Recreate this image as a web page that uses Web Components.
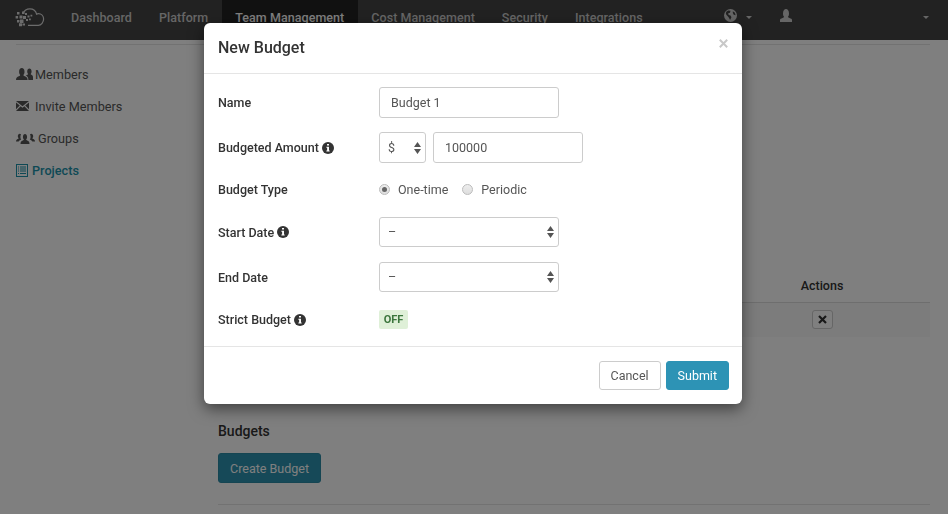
<!DOCTYPE html>
<html>
<head>
<meta charset="utf-8">
<title>New Budget</title>
<style>
  html, body { margin: 0; padding: 0; height: 100%; overflow: hidden; }
  body { font-family: Roboto, "Liberation Sans", sans-serif; font-size: 13px; color: #333; background: #fff; }
</style>
</head>
<body>
<app-shell>
  <top-nav slot="nav">
    <nav-link>Dashboard</nav-link>
    <nav-link>Platform</nav-link>
    <nav-link active>Team Management</nav-link>
    <nav-link>Cost Management</nav-link>
    <nav-link>Security</nav-link>
    <nav-link>Integrations</nav-link>
  </top-nav>
  <side-menu slot="side">
    <side-item icon="members">Members</side-item>
    <side-item icon="invite">Invite Members</side-item>
    <side-item icon="groups">Groups</side-item>
    <side-item icon="projects" active>Projects</side-item>
  </side-menu>
  <project-page slot="main"></project-page>
</app-shell>

<modal-dialog heading="New Budget">
  <form-row label="Name" height="31" gap="14"><text-box width="180" height="31">Budget 1</text-box></form-row>
  <form-row label="Budgeted Amount" info height="31" gap="14">
    <select-box width="47" height="31" short>$</select-box>
    <text-box width="150" height="31" style="margin-left:7px">100000</text-box>
  </form-row>
  <form-row label="Budget Type" height="24" gap="16">
    <radio-option checked>One-time</radio-option>
    <radio-option>Periodic</radio-option>
  </form-row>
  <form-row label="Start Date" info height="30" gap="15"><select-box width="180" height="30">–</select-box></form-row>
  <form-row label="End Date" height="30" gap="14"><select-box width="180" height="30">–</select-box></form-row>
  <form-row label="Strict Budget" info height="27" gap="1"><off-switch>OFF</off-switch></form-row>
  <ui-button slot="footer">Cancel</ui-button>
  <ui-button slot="footer" primary>Submit</ui-button>
</modal-dialog>

<script>
const ICONS = {
  members: '<svg width="17" height="12" viewBox="0 0 17 12"><path fill="currentColor" d="M0 12c0-2.400 1.200-3.200 2.800-3.800 .9-.3 1.400-.8 1.400-1.300-.8-.7-1.100-1.900-1.100-3.200C3.100 1.300 4.200 0 5.800 0s2.700 1.300 2.700 3.700c0 1.300-.3 2.500-1.100 3.200 0 .5.500 1 1.400 1.300 1.600.6 2.800 1.400 2.800 3.800z"/><path fill="currentColor" d="M12.400 12c0-2.400-.9-3.700-2.400-4.500.3-.3.800-.5 1.300-.7.500-.2.800-.5.800-.8-.6-.6-.9-1.500-.9-2.500C11.200 1.500 12.200.5 13.400.5s2.200 1 2.200 3c0 1-.3 1.900-.9 2.500 0 .3.300.6.800.8 1 .4 1.500 1.200 1.500 2.600V12z"/></svg>',
  invite: '<svg width="13" height="10" viewBox="0 0 13 10"><path fill="currentColor" d="M0 0h13L6.500 5.300zM0 1.400l3.800 3.100L0 8.200zM13 1.400v6.800L9.200 4.500zM4.600 5.200l1.900 1.500 1.900-1.500L13 10H0z"/></svg>',
  groups: '<svg width="19" height="12" viewBox="0 0 19 12"><path fill="currentColor" d="M4.500 12c0-2.200 1-3 2.300-3.500.7-.3 1.100-.6 1.100-1-.6-.6-1-1.500-1-2.600 0-2 1-3 2.100-3s2.100 1 2.100 3c0 1.100-.4 2-1 2.600 0 .4.400.7 1.100 1 1.300.5 2.300 1.300 2.300 3.500z"/><path fill="currentColor" d="M0 9.500C0 8 .8 7.300 1.800 6.900c.5-.2.800-.4.800-.7-.5-.5-.8-1.200-.8-2 0-1.600.9-2.500 1.900-2.500.5 0 1 .2 1.300.6-.4.700-.6 1.500-.6 2.600 0 1.100.3 2 .8 2.700-1 .5-2 1.100-2.600 2zM19 9.500c0-1.500-.8-2.200-1.800-2.600-.5-.2-.8-.4-.8-.7.500-.5.800-1.200.8-2 0-1.600-.9-2.500-1.900-2.500-.5 0-1 .2-1.300.6.400.7.600 1.500.6 2.600 0 1.100-.3 2-.8 2.700 1 .5 2 1.100 2.600 2z"/></svg>',
  projects: '<svg width="12" height="13" viewBox="0 0 12 13"><rect x=".5" y=".5" width="11" height="12" fill="none" stroke="currentColor"/><path stroke="currentColor" d="M2 3h1M4 3h6M2 5h1M4 5h6M2 7h1M4 7h6M2 9.500h1M4 9.500h6"/></svg>'
};

class AppShell extends HTMLElement {
  constructor() {
    super();
    this.attachShadow({ mode: 'open' }).innerHTML = `
      <style>
        :host { display: flex; flex-direction: column; height: 514px; }
        .body { flex: 1; display: flex; padding: 0 18px 0 16px; min-height: 0; }
        .inner { flex: 1; display: flex; border-top: 1px solid #e5e5e5; margin-top: 4px; }
      </style>
      <slot name="nav"></slot>
      <div class="body"><div class="inner">
        <slot name="side"></slot>
        <slot name="main"></slot>
      </div></div>`;
  }
}

class TopNav extends HTMLElement {
  constructor() {
    super();
    this.attachShadow({ mode: 'open' }).innerHTML = `
      <style>
        :host { display: flex; height: 40px; background: #444; color: #ccc; align-items: stretch; position: relative; }
        .logo { width: 57.500px; box-sizing: border-box; padding-left: 15px; display: flex; align-items: center; color: #d8d8d8; }
        .logo svg { margin-top: -6px; }
        .links { display: flex; }
        .right { position: absolute; top: 0; left: 724px; right: 0; height: 31px; display: flex; align-items: center; color: #ccc; }
        .caret { width: 0; height: 0; border: 3px solid transparent; border-top-color: currentColor; border-bottom: 0; margin-top: 4px; }
      </style>
      <div class="logo">
        <svg width="30" height="19" viewBox="0 0 30 19">
          <path fill="none" stroke="currentColor" stroke-width="1.200" d="M8 5.500C9.300 2.400 11.700 .8 14.800 .8c3.500 0 6.100 2.200 6.800 5.300 .6-.3 1.100-.4 1.700-.4 3 0 5.300 2.300 5.300 5.300 0 3.100-2.300 6.300-5.300 6.300H13"/>
          <path fill="currentColor" d="M2 4h2.500v2.500H2zM.6 8h2.500v2.500H.6zM4.500 7.500h3v3h-3zM2 12h2.500v2.500H2zM5 11.500h3.500V15H5zM4 15.200h3v3H4zM7.500 15.500h2.500v2H7.500zM8 8h3v3H8zM7 3.500h2.500V6H7zM10 5h2v2h-2zM12.500 7.500h2v2h-2zM11 11h2v2h-2zM15.500 6.800h1.800v1.800h-1.800zM14 10.500h1.800v1.800H14z"/>
        </svg>
      </div>
      <div class="links"><slot></slot></div>
      <div class="right">
        <svg width="13" height="13" viewBox="0 0 14 14"><circle cx="7" cy="7" r="7" fill="currentColor"/><path fill="#444" d="M2.500 3l2-1.500 2.500.5-.5 2-2 .5.500 2 2 .5 1 2-1.500 2.800-1-2-1-1.500-2-2-.5-1.800zM9.500 2.500l2.300 1.500 .7 2.800-2-.5-1-2z"/></svg>
        <span class="caret" style="margin-left:9px"></span>
        <svg style="margin-left:28px" width="12" height="13" viewBox="0 0 12 13"><path fill="currentColor" d="M0 13v-2c0-1 1-1.500 2.500-2 1-.4 1.500-.8 1.500-1.300C3.300 7 3 6 3 4.500 3 1.500 4.300 0 6 0s3 1.500 3 4.500C9 6 8.700 7 8 7.700c0 .5.500.9 1.500 1.300 1.500.5 2.500 1 2.500 2v2z"/></svg>
        <span class="caret" style="margin-left:131px"></span>
      </div>`;
  }
}

class NavLink extends HTMLElement {
  constructor() {
    super();
    this.attachShadow({ mode: 'open' }).innerHTML = `
      <style>
        :host { display: flex; align-items: center; padding: 0 13.500px 5px; font-size: 12.500px; font-weight: 500; letter-spacing: .05px; white-space: nowrap; }
        :host([active]) { background: #222; color: #fff; }
      </style><slot></slot>`;
  }
}

class SideMenu extends HTMLElement {
  constructor() {
    super();
    this.attachShadow({ mode: 'open' }).innerHTML = `
      <style>
        :host { display: flex; flex-direction: column; width: 202px; flex: none; padding-top: 13px; }
      </style><slot></slot>`;
  }
}

class SideItem extends HTMLElement {
  constructor() {
    super();
    this.attachShadow({ mode: 'open' }).innerHTML = `
      <style>
        :host { display: flex; align-items: center; height: 32px; color: #555; font-size: 12.700px; }
        :host([active]) { color: #1d93ab; font-weight: 500; }
        .i { display: flex; }
      </style>
      <span class="i">${ICONS[this.getAttribute('icon')]}</span><slot></slot>`;
    const gaps = { invite: 6, projects: 4, groups: 3, members: 2 };
    this.shadowRoot.querySelector('.i').style.marginRight = gaps[this.getAttribute('icon')] + 'px';
  }
}

class ProjectPage extends HTMLElement {
  constructor() {
    super();
    this.attachShadow({ mode: 'open' }).innerHTML = `
      <style>
        :host { display: block; flex: 1; padding-top: 230px; color: #333; }
        .thead { display: flex; justify-content: flex-end; border-bottom: 1px solid #ddd; height: 27px; }
        .th { width: 216px; text-align: center; font-weight: 500; font-size: 12.500px; line-height: 22px; }
        .row { display: flex; justify-content: flex-end; align-items: center; box-sizing: border-box; height: 34px; padding-bottom: 1px; background: #f9f9f9; }
        .cell { width: 216px; display: flex; justify-content: center; }
        .x { width: 19px; height: 17px; border: 1px solid #ccc; border-radius: 3px; display: flex; align-items: center; justify-content: center; background: #fff; }
        h3 { margin: 85px 0 0; font-size: 14px; font-weight: 500; line-height: 18px; }
        .btn { display: inline-flex; margin-top: 13px; align-items: center; height: 28px; padding: 0 11px; background: #2d93b0; border: 1px solid #2b8aa5; border-radius: 3px; color: #fff; font-size: 12.500px; }
        hr { border: 0; border-top: 1px solid #e5e5e5; margin: 21px 0 0; }
      </style>
      <div class="thead"><div class="th">Actions</div></div>
      <div class="row"><div class="cell"><span class="x">
        <svg width="9" height="9" viewBox="0 0 9 9"><path d="M1 1l7 7M8 1l-7 7" stroke="#333" stroke-width="2.200"/></svg>
      </span></div></div>
      <h3>Budgets</h3>
      <div class="btn">Create Budget</div>
      <hr>`;
  }
}

class ModalDialog extends HTMLElement {
  constructor() {
    super();
    this.attachShadow({ mode: 'open' }).innerHTML = `
      <style>
        :host { position: fixed; inset: 0; display: block; background: rgba(0,0,0,.5); }
        .dlg { position: absolute; left: 204px; top: 23px; width: 538px; background: #fff; border-radius: 6px; box-shadow: 0 5px 15px rgba(0,0,0,.5); color: #333; will-change: transform; }
        header { height: 50px; display: flex; align-items: center; justify-content: space-between; padding: 0 14px; border-bottom: 1px solid #e5e5e5; }
        h4 { margin: 0 0 1px; font-size: 16px; font-weight: 500; }
        .close { width: 9px; height: 9px; margin: -9px 0 0; display: flex; }
        .content { padding: 13px 14px 12px; }
        footer { display: flex; justify-content: flex-end; gap: 5px; padding: 14px 13px 14px; border-top: 1px solid #e5e5e5; }
      </style>
      <div class="dlg">
        <header><h4>${this.getAttribute('heading')}</h4>
          <span class="close"><svg width="9" height="9" viewBox="0 0 9 9"><path d="M.8.8l7.400 7.400M8.200.8L.8 8.200" stroke="#c8c8c8" stroke-width="2"/></svg></span>
        </header>
        <div class="content"><slot></slot></div>
        <footer><slot name="footer"></slot></footer>
      </div>`;
  }
}

class FormRow extends HTMLElement {
  constructor() {
    super();
    this.attachShadow({ mode: 'open' }).innerHTML = `
      <style>
        :host { display: grid; grid-template-columns: 161px 1fr; align-items: center; }
        label { font-size: 12.500px; font-weight: 500; display: flex; align-items: center; gap: 3px; }
        .ctl { display: flex; align-items: center; }
      </style>
      <label>${this.getAttribute('label')}${this.hasAttribute('info') ? '<info-icon></info-icon>' : ''}</label>
      <div class="ctl"><slot></slot></div>`;
    this.style.height = this.getAttribute('height') + 'px';
    this.style.marginBottom = this.getAttribute('gap') + 'px';
  }
}

class InfoIcon extends HTMLElement {
  constructor() {
    super();
    this.attachShadow({ mode: 'open' }).innerHTML = `
      <style>:host { display: inline-flex; }</style>
      <svg width="12" height="12" viewBox="0 0 11 11"><circle cx="5.500" cy="5.500" r="5.500" fill="#333"/><path fill="#fff" d="M4.600 1.800h1.800v1.500H4.600zM4 4.300h2.400v3.500H7v1H4v-1h.7V5.300H4z"/></svg>`;
  }
}

class TextBox extends HTMLElement {
  constructor() {
    super();
    this.attachShadow({ mode: 'open' }).innerHTML = `
      <style>
        :host { display: flex; align-items: center; box-sizing: border-box; padding: 0 11px; border: 1px solid #ccc; border-radius: 3px; background: #fff; color: #555; font-size: 12.500px; }
      </style><slot></slot>`;
    this.style.width = this.getAttribute('width') + 'px';
    this.style.height = this.getAttribute('height') + 'px';
  }
}

class SelectBox extends HTMLElement {
  constructor() {
    super();
    this.attachShadow({ mode: 'open' }).innerHTML = `
      <style>
        :host { display: flex; align-items: center; justify-content: space-between; box-sizing: border-box; padding: 0 4px 0 8px; border: 1px solid #ccc; border-radius: 3px; background: #fff; color: #555; font-size: 12.500px; }
        .t { margin-top: -2px; }
        :host([short]) .t { margin-top: 0; }
        svg { display: block; }
      </style>
      <span class="t"><slot></slot></span>
      <svg width="7" height="12" viewBox="0 0 7 12"><path fill="#555" d="M3.500 0L7 5H0zM0 7h7l-3.500 5z"/></svg>`;
    this.style.width = this.getAttribute('width') + 'px';
    this.style.height = this.getAttribute('height') + 'px';
  }
}

class RadioOption extends HTMLElement {
  constructor() {
    super();
    this.attachShadow({ mode: 'open' }).innerHTML = `
      <style>
        :host { display: inline-flex; align-items: center; margin-right: 14px; font-size: 12.500px; color: #555; }
        .d { width: 9px; height: 9px; border: 1px solid #bbb; border-radius: 50%; margin-right: 8px; background: linear-gradient(#eee,#ddd); display: flex; align-items: center; justify-content: center; }
        :host([checked]) .d::after { content: ""; width: 5px; height: 5px; border-radius: 50%; background: #666; }
      </style>
      <span class="d"></span><slot></slot>`;
  }
}

class OffSwitch extends HTMLElement {
  constructor() {
    super();
    this.attachShadow({ mode: 'open' }).innerHTML = `
      <style>
        :host { display: inline-flex; align-items: center; justify-content: center; width: 29px; height: 19px; background: #dff0d8; border-radius: 2px; color: #3c763d; font-size: 11px; font-weight: 700; }
      </style><slot></slot>`;
  }
}

class UiButton extends HTMLElement {
  constructor() {
    super();
    this.attachShadow({ mode: 'open' }).innerHTML = `
      <style>
        :host { display: inline-flex; align-items: center; box-sizing: border-box; height: 29px; padding: 0 11px; border: 1px solid #ccc; border-radius: 3px; background: #fff; color: #555; font-size: 12.500px; }
        :host([primary]) { background: #2d93b5; border-color: #2d93b5; color: #fff; }
      </style><slot></slot>`;
  }
}

customElements.define('app-shell', AppShell);
customElements.define('top-nav', TopNav);
customElements.define('nav-link', NavLink);
customElements.define('side-menu', SideMenu);
customElements.define('side-item', SideItem);
customElements.define('project-page', ProjectPage);
customElements.define('modal-dialog', ModalDialog);
customElements.define('form-row', FormRow);
customElements.define('info-icon', InfoIcon);
customElements.define('text-box', TextBox);
customElements.define('select-box', SelectBox);
customElements.define('radio-option', RadioOption);
customElements.define('off-switch', OffSwitch);
customElements.define('ui-button', UiButton);
</script>
</body>
</html>
